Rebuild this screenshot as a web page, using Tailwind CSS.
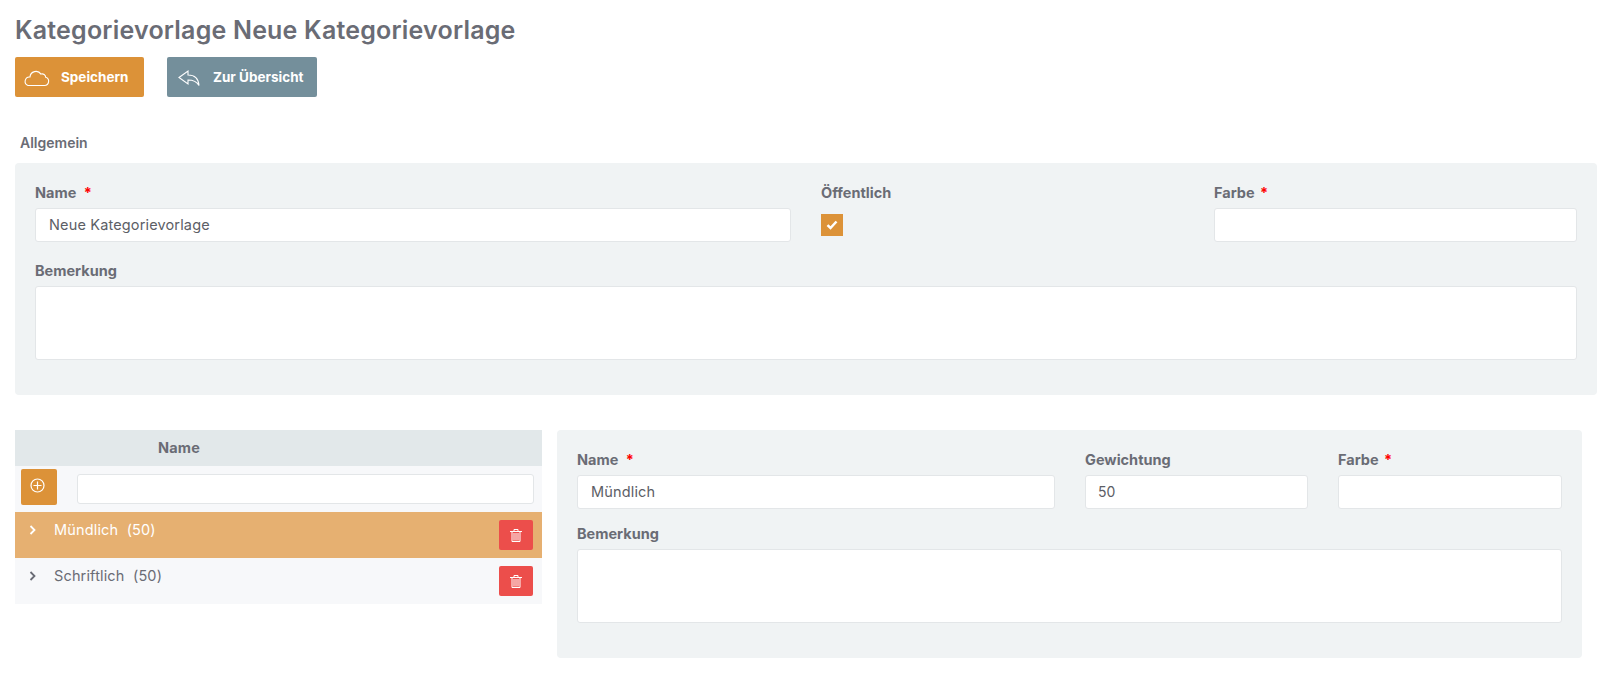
<!DOCTYPE html>
<html lang="de">
<head>
    <meta charset="UTF-8">
    <script src="https://cdn.jsdelivr.net/npm/@tailwindcss/browser@4"></script>
</head>
<body class="bg-white text-[#6a6c75] font-['Inter','Liberation_Sans',sans-serif]">
<div class="px-[15px] w-[1611px] h-[680px] overflow-hidden">

    <h1 class="pt-[15px] h-[57px] text-[25px] leading-[30px] font-semibold tracking-[0.2px]">Kategorievorlage Neue Kategorievorlage</h1>

    <div class="flex gap-[23px]">
        <button class="flex items-center w-[129px] h-[40px] pl-[8px] bg-[#dc9238] rounded-[2px] text-white text-[13.500px] font-bold">
            <svg class="w-[27px] h-[18px] mr-[11px] mt-[2px]" viewBox="0 0 27 18" fill="none" stroke="currentColor" stroke-width="1.100">
                <path d="M6 16.500h15.500a4.200 4.200 0 0 0 1.200-8.200 3.500 3.500 0 0 0-4.700-3.200 6 6 0 0 0-11 2.900 4.400 4.400 0 0 0-2 8.500z"/>
            </svg>
            <span class="mt-[1px]">Speichern</span>
        </button>
        <button class="flex items-center w-[150px] h-[40px] pl-[11px] bg-[#748f9b] rounded-[2px] text-white text-[13.500px] font-bold">
            <svg class="w-[22px] h-[18px] mr-[13px] mt-[2px]" viewBox="0 0 22 18" fill="none" stroke="currentColor" stroke-width="1.100">
                <path d="M1 8.500l9-6.500v4c6 0 10.500 3.500 11 10.500-2-3.500-6-5.500-11-5.500v4z"/>
            </svg>
            <span class="mt-[1px]">Zur Übersicht</span>
        </button>
    </div>

    <div class="pt-[36px] h-[66px] pl-[5px] text-[14px] leading-[20px] font-semibold">Allgemein</div>

    <div class="w-[1582px] h-[232px] px-[20px] pt-[20px] bg-[#f0f3f4] rounded-[4px]">
        <div class="flex">
            <div class="w-[756px]">
                <label class="block h-[25px] text-[14.500px] leading-[20px] font-bold">Name <span class="text-[#f00] ml-[4px]">*</span></label>
                <input class="block w-full h-[34px] pl-[13px] pr-[13px] pb-[2px] bg-white border border-[#e3e6e8] rounded-[3px] text-[14.500px] tracking-[0.15px] text-[#5c5e66]" value="Neue Kategorievorlage">
            </div>
            <div class="w-[393px] ml-[30px]">
                <label class="block h-[25px] text-[14.500px] leading-[20px] font-bold">Öffentlich</label>
                <div class="flex items-center justify-center w-[22px] h-[22px] mt-[6px] bg-[#dc9238]">
                    <svg class="w-[12px] h-[10px]" viewBox="0 0 12 10" fill="none" stroke="white" stroke-width="2.500">
                        <path d="M1.500 5.200l3 2.800 6-6.500"/>
                    </svg>
                </div>
            </div>
            <div class="w-[363px]">
                <label class="block h-[25px] text-[14.500px] leading-[20px] font-bold">Farbe <span class="text-[#f00] ml-[2px]">*</span></label>
                <input class="block w-full h-[34px] px-[13px] bg-white border border-[#e3e6e8] rounded-[3px]">
            </div>
        </div>
        <label class="block mt-[19px] h-[25px] text-[14.500px] leading-[20px] font-bold">Bemerkung</label>
        <div class="w-full h-[74px] bg-white border border-[#e3e6e8] rounded-[3px]"></div>
    </div>

    <div class="flex mt-[35px]">
        <div class="w-[527px]">
            <div class="h-[36px] pl-[143px] bg-[#e2e8ea] text-[14.500px] tracking-[0.2px] leading-[36px] font-bold">Name</div>
            <div class="flex items-center h-[46px] pl-[6px] bg-[#f7f8fa]">
                <button class="flex items-center justify-center w-[36px] h-[36px] -mt-[4px] bg-[#dc9238] rounded-[2px]">
                    <svg class="w-[15px] h-[15px] -mt-[3px] -ml-[3px]" viewBox="0 0 15 15" fill="none" stroke="white" stroke-width="1.200">
                        <circle cx="7.500" cy="7.500" r="6.500"/>
                        <path d="M7.500 3.500v8M3.500 7.500h8"/>
                    </svg>
                </button>
                <input class="block w-[457px] h-[30px] ml-[20px] bg-white border border-[#e3e6e8] rounded-[3px]">
            </div>
            <div class="flex items-start h-[46px] pl-[14px] bg-[#e6b071] text-white">
                <svg class="w-[8px] h-[10px] mt-[13px]" viewBox="0 0 8 10" fill="none" stroke="currentColor" stroke-width="1.800">
                    <path d="M1.500 1l4 4-4 4"/>
                </svg>
                <span class="ml-[17px] mt-[8px] text-[14.500px] tracking-[0.15px] leading-[20px]">Mündlich&nbsp; (50)</span>
                <button class="flex items-center justify-center w-[34px] h-[30px] mt-[8px] ml-auto mr-[9px] bg-[#ec4e4b] rounded-[2px]">
                    <svg class="w-[12px] h-[13px]" viewBox="0 0 12 13" fill="none" stroke="white">
                        <path d="M0 2.500h12M4 2.500v-2h4v2M2 3v9.500h8V3M4 4v7.500M6 4v7.500M8 4v7.500"/>
                    </svg>
                </button>
            </div>
            <div class="flex items-start h-[46px] pl-[14px] bg-[#f7f8fa]">
                <svg class="w-[8px] h-[10px] mt-[13px]" viewBox="0 0 8 10" fill="none" stroke="currentColor" stroke-width="1.800">
                    <path d="M1.500 1l4 4-4 4"/>
                </svg>
                <span class="ml-[17px] mt-[8px] text-[14.500px] tracking-[0.15px] leading-[20px]">Schriftlich&nbsp; (50)</span>
                <button class="flex items-center justify-center w-[34px] h-[30px] mt-[8px] ml-auto mr-[9px] bg-[#ec4e4b] rounded-[2px]">
                    <svg class="w-[12px] h-[13px]" viewBox="0 0 12 13" fill="none" stroke="white">
                        <path d="M0 2.500h12M4 2.500v-2h4v2M2 3v9.500h8V3M4 4v7.500M6 4v7.500M8 4v7.500"/>
                    </svg>
                </button>
            </div>
        </div>

        <div class="w-[1025px] h-[228px] ml-[15px] px-[20px] pt-[20px] bg-[#f0f3f4] rounded-[4px]">
            <div class="flex">
                <div class="w-[478px]">
                    <label class="block h-[25px] text-[14.500px] leading-[20px] font-bold">Name <span class="text-[#f00] ml-[4px]">*</span></label>
                    <input class="block w-full h-[34px] px-[13px] pb-[2px] bg-white border border-[#e3e6e8] rounded-[3px] text-[14.500px] tracking-[0.15px] text-[#5c5e66]" value="Mündlich">
                </div>
                <div class="w-[223px] ml-[30px]">
                    <label class="block h-[25px] text-[14.500px] leading-[20px] font-bold">Gewichtung</label>
                    <input class="block w-full h-[34px] px-[12px] pb-[2px] bg-white border border-[#e3e6e8] rounded-[3px] text-[14px] text-[#5c5e66]" value="50">
                </div>
                <div class="w-[224px] ml-[30px]">
                    <label class="block h-[25px] text-[14.500px] leading-[20px] font-bold">Farbe <span class="text-[#f00] ml-[2px]">*</span></label>
                    <input class="block w-full h-[34px] px-[13px] bg-white border border-[#e3e6e8] rounded-[3px]">
                </div>
            </div>
            <label class="block mt-[15px] h-[25px] text-[14.500px] leading-[20px] font-bold">Bemerkung</label>
            <div class="w-full h-[74px] bg-white border border-[#e3e6e8] rounded-[3px]"></div>
        </div>
    </div>
</div>
</body>
</html>
